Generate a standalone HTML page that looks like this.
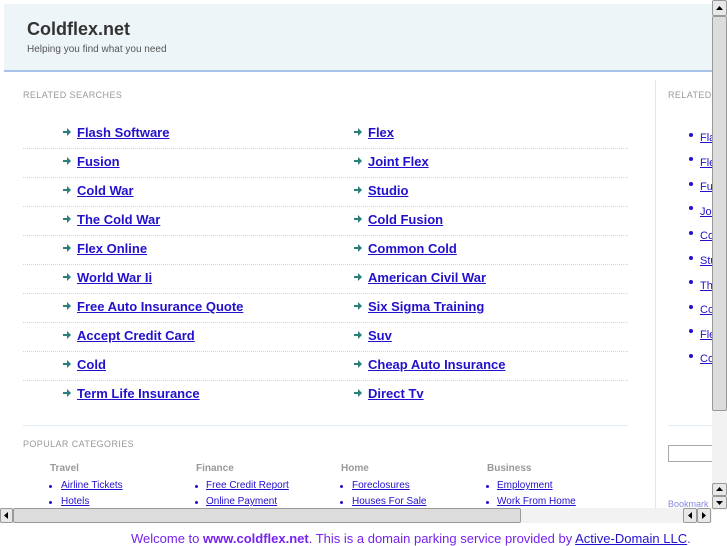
<!DOCTYPE html>
<html><head><meta charset="utf-8"><style>
*{margin:0;padding:0;box-sizing:border-box}
body{width:727px;height:545px;overflow:hidden;background:#fff;font-family:"Liberation Sans",sans-serif;position:relative}
.a{position:absolute;white-space:nowrap}
#hdr{position:absolute;left:4px;top:4px;width:708px;height:68px;background:#eef5f8;border-bottom:2px solid #a9c3e8}
.lbl{font-size:9px;color:#999;letter-spacing:.4px}
.lk{font-size:13px;font-weight:bold;color:#2211cc;text-decoration:underline}
.sep{position:absolute;left:23px;width:605px;border-top:1px dotted #c5d6ef;height:0}
.ch{font-size:10px;font-weight:bold;color:#999}
.cl{font-size:10px;color:#2211cc;text-decoration:underline}
.dot{position:absolute;width:4px;height:4px;border-radius:2px;background:#2211cc}
.sb{position:absolute;background:#e8e8e8;border:1px solid #999;border-radius:2px}
</style></head><body>
<div id="hdr"></div>
<div class="a" style="left:27px;top:19px;font-size:18px;font-weight:bold;color:#333">Coldflex.net</div>
<div class="a" style="left:27px;top:44px;font-size:10px;color:#555">Helping you find what you need</div>
<div class="a lbl" style="left:23px;top:90px">RELATED SEARCHES</div>
<div class="a lbl" style="left:668px;top:90px">RELATED</div>
<div style="position:absolute;left:655px;top:80px;width:1px;height:430px;background:#dde6f2"></div>

<div class="a lk" style="left:77px;top:125px">Flash Software</div><div class="a lk" style="left:368px;top:125px">Flex</div>
<div class="a lk" style="left:77px;top:154px">Fusion</div><div class="a lk" style="left:368px;top:154px">Joint Flex</div>
<div class="a lk" style="left:77px;top:183px">Cold War</div><div class="a lk" style="left:368px;top:183px">Studio</div>
<div class="a lk" style="left:77px;top:212px">The Cold War</div><div class="a lk" style="left:368px;top:212px">Cold Fusion</div>
<div class="a lk" style="left:77px;top:241px">Flex Online</div><div class="a lk" style="left:368px;top:241px">Common Cold</div>
<div class="a lk" style="left:77px;top:270px">World War Ii</div><div class="a lk" style="left:368px;top:270px">American Civil War</div>
<div class="a lk" style="left:77px;top:299px">Free Auto Insurance Quote</div><div class="a lk" style="left:368px;top:299px">Six Sigma Training</div>
<div class="a lk" style="left:77px;top:328px">Accept Credit Card</div><div class="a lk" style="left:368px;top:328px">Suv</div>
<div class="a lk" style="left:77px;top:357px">Cold</div><div class="a lk" style="left:368px;top:357px">Cheap Auto Insurance</div>
<div class="a lk" style="left:77px;top:386px">Term Life Insurance</div><div class="a lk" style="left:368px;top:386px">Direct Tv</div>

<svg style="position:absolute;left:0;top:0" width="727" height="545" fill="#2a7f78">
<g id="arr"><path d="M63 131h4v-3l4 4-4 4v-3h-4z"/><path d="M354 131h4v-3l4 4-4 4v-3h-4z"/></g>
<use href="#arr" y="29"/><use href="#arr" y="58"/><use href="#arr" y="87"/><use href="#arr" y="116"/>
<use href="#arr" y="145"/><use href="#arr" y="174"/><use href="#arr" y="203"/><use href="#arr" y="232"/><use href="#arr" y="261"/>
</svg>

<div class="sep" style="top:148px"></div><div class="sep" style="top:177px"></div><div class="sep" style="top:206px"></div>
<div class="sep" style="top:235px"></div><div class="sep" style="top:264px"></div><div class="sep" style="top:293px"></div>
<div class="sep" style="top:322px"></div><div class="sep" style="top:351px"></div><div class="sep" style="top:380px"></div>
<div style="position:absolute;left:23px;top:425px;width:605px;height:1px;background:#e3ebf5"></div>
<div style="position:absolute;left:668px;top:425px;width:44px;height:1px;background:#e3ebf5"></div>

<div class="a" style="left:700px;top:126px;font-size:11px;color:#2211cc;text-decoration:underline;line-height:24.6px">Fla<br>Fle<br>Fus<br>Joi<br>Co<br>Stu<br>The<br>Co<br>Fle<br>Co</div>
<div class="dot" style="left:689px;top:133px"></div><div class="dot" style="left:689px;top:157px"></div><div class="dot" style="left:689px;top:182px"></div><div class="dot" style="left:689px;top:206px"></div><div class="dot" style="left:689px;top:231px"></div><div class="dot" style="left:689px;top:256px"></div><div class="dot" style="left:689px;top:280px"></div><div class="dot" style="left:689px;top:305px"></div><div class="dot" style="left:689px;top:329px"></div><div class="dot" style="left:689px;top:354px"></div>
<div style="position:absolute;left:668px;top:445px;width:50px;height:17px;border:1px solid #aaa"></div>
<div class="a" style="left:668px;top:499px;font-size:9px;color:#8888dd">Bookmark</div>

<div class="a lbl" style="left:23px;top:439px">POPULAR CATEGORIES</div>
<div class="a ch" style="left:50px;top:463px">Travel</div><div class="a ch" style="left:196px;top:463px">Finance</div><div class="a ch" style="left:341px;top:463px">Home</div><div class="a ch" style="left:487px;top:463px">Business</div>
<div class="a cl" style="left:61px;top:480px">Airline Tickets</div><div class="a cl" style="left:206px;top:480px">Free Credit Report</div><div class="a cl" style="left:352px;top:480px">Foreclosures</div><div class="a cl" style="left:497px;top:480px">Employment</div>
<div class="a cl" style="left:61px;top:496px">Hotels</div><div class="a cl" style="left:206px;top:496px">Online Payment</div><div class="a cl" style="left:352px;top:496px">Houses For Sale</div><div class="a cl" style="left:497px;top:496px">Work From Home</div>
<div class="dot" style="left:49px;top:485px;width:3px;height:3px"></div><div class="dot" style="left:195px;top:485px;width:3px;height:3px"></div><div class="dot" style="left:340px;top:485px;width:3px;height:3px"></div><div class="dot" style="left:486px;top:485px;width:3px;height:3px"></div>
<div class="dot" style="left:49px;top:501px;width:3px;height:3px"></div><div class="dot" style="left:195px;top:501px;width:3px;height:3px"></div><div class="dot" style="left:340px;top:501px;width:3px;height:3px"></div><div class="dot" style="left:486px;top:501px;width:3px;height:3px"></div>

<div style="position:absolute;left:712px;top:0;width:15px;height:510px;background:#f2f2f2"></div>
<div class="sb" style="left:712px;top:0;width:15px;height:16px"></div>
<div class="sb" style="left:712px;top:16px;width:15px;height:395px;background:#dcdcdc"></div>
<div class="sb" style="left:712px;top:483px;width:15px;height:13px"></div>
<div class="sb" style="left:712px;top:496px;width:15px;height:13px"></div>
<div style="position:absolute;left:0;top:508px;width:712px;height:15px;background:#f2f2f2"></div>
<div class="sb" style="left:0;top:508px;width:13px;height:15px"></div>
<div class="sb" style="left:13px;top:508px;width:508px;height:15px;background:#dcdcdc"></div>
<div class="sb" style="left:683px;top:508px;width:14px;height:15px"></div>
<div class="sb" style="left:697px;top:508px;width:14px;height:15px"></div>
<svg style="position:absolute;left:0;top:0" width="727" height="545" fill="#000">
<path d="M716 10l3.5-4 3.5 4z"/><path d="M716 491l3.5-4 3.5 4z"/><path d="M716 501l3.5 4 3.5-4z"/>
<path d="M8 512l-4 3.5 4 3.5z"/><path d="M692 512l-4 3.5 4 3.5z"/><path d="M702 512l4 3.5-4 3.5z"/>
</svg>

<div class="a" style="left:131px;top:531px;font-size:13px;color:#7722ee">Welcome to <b>www.coldflex.net</b>. This is a domain parking service provided by <span style="color:#2211cc;text-decoration:underline">Active-Domain LLC</span>.</div>
</body></html>
